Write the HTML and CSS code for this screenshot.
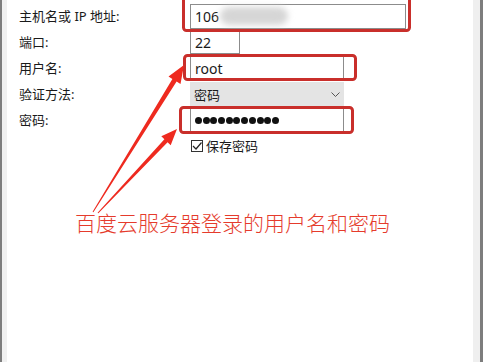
FILE: index.html
```html
<!DOCTYPE html>
<html lang="zh-CN">
<head>
    <meta charset="UTF-8">
    <title>SSH 登录</title>
    <link rel="stylesheet" href="styles.css">
</head>
<body>
    <div class="window">
        <div class="pane">
            <div class="form">
                <label>主机名或 IP 地址:</label>
                <div class="field host">106<span class="blur"></span></div>

                <label>端口:</label>
                <div class="field port">22</div>

                <label>用户名:</label>
                <div class="field user">root</div>

                <label>验证方法:</label>
                <div class="field select">密码
                    <svg class="chevron" width="9" height="5" viewBox="0 0 9 5"><path d="M0.5 0.5 L4.5 4.5 L8.5 0.5" fill="none" stroke="#555" stroke-width="1"/></svg>
                </div>

                <label>密码:</label>
                <div class="field pass">
                    <span class="dot"></span><span class="dot"></span><span class="dot"></span><span class="dot"></span>
                    <span class="dot"></span><span class="dot"></span><span class="dot"></span><span class="dot"></span>
                    <span class="dot"></span><span class="dot"></span><span class="dot"></span>
                </div>

                <span></span>
                <label class="check">
                    <span class="box"><svg width="10" height="10" viewBox="0 0 10 10"><path d="M1 5 L4 8 L9.5 1.5" fill="none" stroke="#222" stroke-width="1.2"/></svg></span>
                    保存密码
                </label>
            </div>

            <p class="caption">百度云服务器登录的用户名和密码</p>
        </div>

        <!-- annotation layer: red boxes and arrows -->
        <svg class="marks" width="483" height="362" viewBox="0 0 483 362">
            <g fill="none" stroke="#c92f2b" stroke-width="3">
                <rect x="183.5" y="-3" width="226" height="33.5" rx="3"/>
                <rect x="184.5" y="55.5" width="171" height="24" rx="3"/>
                <rect x="180.5" y="107.5" width="172" height="25" rx="3"/>
            </g>
            <g fill="#ee2a1f">
                <polygon points="93.4,212.3 176.6,81.6 180.5,84 184,65 168.5,76.6 172.4,79 92.6,211.7"/>
                <polygon points="98.4,213.3 167.6,142.2 170.7,145.2 177,129 161.3,136.2 164.4,139.2 97.6,212.7"/>
            </g>
        </svg>
    </div>
</body>
</html>
```

FILE: styles.css
```css
:root {
    --font: "Noto Sans", "Noto Sans CJK SC", sans-serif;
    --text: #1a1a1a;
    --field-border: #8c8c8c;
    --accent: #e53b2c;
}
body {
    margin: 0;
    font-family: var(--font);
    color: var(--text);
    background: #ffffff;
}
.window {
    position: relative;
    width: 483px;
    height: 362px;
    box-sizing: border-box;
    border-left: 2px solid #7d7d7d;
    border-right: 3px solid #7d7d7d;
    overflow: hidden;
}
.pane {
    height: 100%;
    box-sizing: border-box;
    border-left: 5px solid #f0f0f0;
    border-right: 7px solid #efefef;
    background: #ffffff;
}
.form {
    display: grid;
    grid-template-columns: 171px 1fr;
    grid-auto-rows: 26px;
    align-items: center;
    padding: 3px 0 0 12px;
    font-size: 13px;
}
.form label {
    line-height: 26px;
}
.field {
    height: 24px;
    box-sizing: border-box;
    border: 1px solid var(--field-border);
    display: flex;
    align-items: center;
    padding-left: 4px;
    font-size: 14px;
    background: #ffffff;
}
.host {
    width: 216px;
    height: 25px;
}
.blur {
    display: inline-block;
    width: 68px;
    height: 18px;
    margin-left: 1px;
    border-radius: 9px;
    background: #d6d6d6;
    filter: blur(3px);
}
.port {
    width: 50px;
}
.user, .pass {
    width: 154px;
}
.select {
    width: 154px;
    border: none;
    background: #e4e4e4;
    justify-content: space-between;
    padding-right: 4px;
    font-size: 13px;
}
.pass {
    gap: 0.7px;
    padding-left: 4px;
}
.dot {
    width: 7px;
    height: 7px;
    border-radius: 50%;
    background: #111;
}
.check {
    display: flex;
    align-items: center;
    gap: 3px;
    margin-left: 1px;
}
.box {
    width: 12px;
    height: 12px;
    box-sizing: border-box;
    border: 1px solid #333;
    display: flex;
    align-items: center;
    justify-content: center;
}
.caption {
    margin: 52px 0 0 68px;
    font-size: 21px;
    line-height: 25px;
    font-weight: 300;
    color: var(--accent);
}
.marks {
    position: absolute;
    top: 0;
    left: -2px;
    pointer-events: none;
}
```
